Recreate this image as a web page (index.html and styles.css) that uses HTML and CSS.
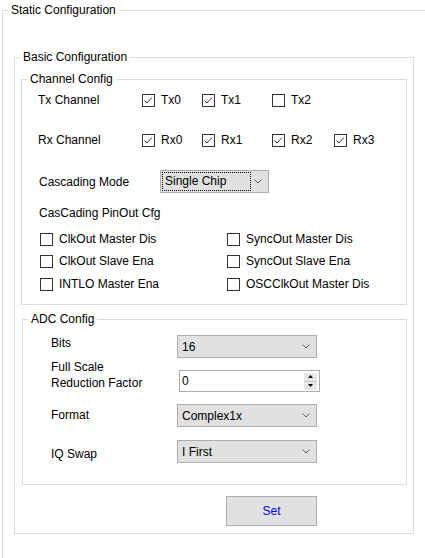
FILE: index.html
```html
<!DOCTYPE html>
<html>
<head>
<meta charset="utf-8">
<title>Static Configuration</title>
<link rel="stylesheet" href="styles.css">
</head>
<body>
<fieldset class="grp outer">
  <legend>Static Configuration</legend>
  <fieldset class="grp basic">
    <legend>Basic Configuration</legend>
    <fieldset class="grp channel">
      <legend>Channel Config</legend>
      <div class="chrow tx">
        <span class="lbl">Tx Channel</span>
        <label class="cb"><span class="box"><svg viewBox="0 0 13 13" width="13" height="13"><polyline points="2.5,6.5 5,9 10,3.5" /></svg></span>Tx0</label>
        <label class="cb"><span class="box"><svg viewBox="0 0 13 13" width="13" height="13"><polyline points="2.5,6.5 5,9 10,3.5" /></svg></span>Tx1</label>
        <label class="cb"><span class="box"></span>Tx2</label>
      </div>
      <div class="chrow rx">
        <span class="lbl">Rx Channel</span>
        <label class="cb"><span class="box"><svg viewBox="0 0 13 13" width="13" height="13"><polyline points="2.5,6.5 5,9 10,3.5" /></svg></span>Rx0</label>
        <label class="cb"><span class="box"><svg viewBox="0 0 13 13" width="13" height="13"><polyline points="2.5,6.5 5,9 10,3.5" /></svg></span>Rx1</label>
        <label class="cb"><span class="box"><svg viewBox="0 0 13 13" width="13" height="13"><polyline points="2.5,6.5 5,9 10,3.5" /></svg></span>Rx2</label>
        <label class="cb"><span class="box"><svg viewBox="0 0 13 13" width="13" height="13"><polyline points="2.5,6.5 5,9 10,3.5" /></svg></span>Rx3</label>
      </div>
      <div class="casrow">
        <span class="lbl">Cascading Mode</span>
        <div class="combo cascombo">
          <span class="focus">Single Chip</span>
          <svg class="arrow" viewBox="0 0 8 5" width="8" height="5"><polyline points="0.5,0.5 4,4 7.5,0.5" /></svg>
        </div>
      </div>
      <div class="pinlbl">CasCading PinOut Cfg</div>
      <div class="pingrid">
        <label class="cb"><span class="box"></span>ClkOut Master Dis</label>
        <label class="cb"><span class="box"></span>SyncOut Master Dis</label>
        <label class="cb"><span class="box"></span>ClkOut Slave Ena</label>
        <label class="cb"><span class="box"></span>SyncOut Slave Ena</label>
        <label class="cb"><span class="box"></span>INTLO Master Ena</label>
        <label class="cb"><span class="box"></span>OSCClkOut Master Dis</label>
      </div>
    </fieldset>
    <fieldset class="grp adc">
      <legend>ADC Config</legend>
      <div class="adcrow r-bits">
        <span class="lbl">Bits</span>
        <div class="combo adccombo"><span class="val">16</span><svg class="arrow" viewBox="0 0 8 5" width="8" height="5"><polyline points="0.5,0.5 4,4 7.5,0.5" /></svg></div>
      </div>
      <div class="adcrow r-fs">
        <span class="lbl">Full Scale<br>Reduction Factor</span>
        <div class="spin">
          <span class="val">0</span>
          <div class="spinbtns">
            <span class="sb"><svg viewBox="0 0 5 3" width="5" height="3"><polygon points="0,3 2.5,0 5,3" /></svg></span>
            <span class="sb"><svg viewBox="0 0 5 3" width="5" height="3"><polygon points="0,0 2.5,3 5,0" /></svg></span>
          </div>
        </div>
      </div>
      <div class="adcrow r-fmt">
        <span class="lbl">Format</span>
        <div class="combo adccombo"><span class="val">Complex1x</span><svg class="arrow" viewBox="0 0 8 5" width="8" height="5"><polyline points="0.5,0.5 4,4 7.5,0.5" /></svg></div>
      </div>
      <div class="adcrow r-iq">
        <span class="lbl">IQ Swap</span>
        <div class="combo adccombo"><span class="val">I First</span><svg class="arrow" viewBox="0 0 8 5" width="8" height="5"><polyline points="0.5,0.5 4,4 7.5,0.5" /></svg></div>
      </div>
    </fieldset>
    <button class="setbtn" type="button">Set</button>
  </fieldset>
</fieldset>
</body>
</html>
```
FILE: styles.css
```css
html, body {
  margin: 0;
  padding: 0;
  width: 425px;
  height: 558px;
  overflow: hidden;
  background: #ffffff;
}
body {
  font-family: "Liberation Sans", Arial, sans-serif;
  font-size: 12px;
  line-height: 14px;
  color: #000000;
}
.grp {
  margin: 0;
  padding: 0;
  min-width: 0;
  border: 1px solid #dcdcdc;
  box-sizing: border-box;
}
.grp > legend {
  margin-left: 5px;
  padding: 0 3px;
  line-height: 14px;
}
.outer {
  margin: 3px 0 0 2px;
  width: 423px;
  height: 555px;
  border-right-width: 0;
  border-bottom-width: 0;
}
.basic {
  margin: 33px 0 0 11px;
  width: 400px;
  padding-bottom: 7px;
}
.channel {
  margin: 8px 0 0 6px;
  width: 386px;
  padding-bottom: 12px;
}
.adc {
  margin: 7px 0 0 7px;
  width: 385px;
  padding-bottom: 21px;
}
.chrow {
  display: grid;
  grid-template-columns: 104px 60px 70px 62px 1fr;
  align-items: center;
  height: 24px;
  padding-left: 16px;
}
.chrow.tx { margin-top: 2px; }
.chrow.rx { margin-top: 16px; }
.cb {
  display: flex;
  align-items: center;
  gap: 6px;
  white-space: nowrap;
}
.box {
  display: block;
  width: 13px;
  height: 13px;
  box-sizing: border-box;
  border: 1px solid #333333;
  background: #ffffff;
}
.box svg {
  display: block;
  margin: -1px 0 0 -1px;
  fill: none;
  stroke: #333333;
  stroke-width: 1;
}
.casrow {
  display: grid;
  grid-template-columns: 121px 109px;
  align-items: center;
  height: 23px;
  margin-top: 18px;
  padding-left: 17px;
}
.combo {
  display: flex;
  align-items: center;
  justify-content: space-between;
  box-sizing: border-box;
  height: 23px;
  background: #e1e1e1;
  border: 1px solid #adadad;
}
.combo .arrow {
  display: block;
  fill: none;
  stroke: #606060;
  stroke-width: 1;
  margin-right: 6px;
}
.focus {
  display: block;
  box-sizing: border-box;
  width: 89px;
  height: 19px;
  margin-left: 1px;
  padding-left: 2px;
  line-height: 17px;
  border: 1px dotted #000000;
}
.pinlbl {
  margin-top: 13px;
  padding-left: 17px;
  height: 14px;
}
.pingrid {
  display: grid;
  grid-template-columns: 187px 1fr;
  grid-template-rows: 22px 23px 16px;
  align-items: start;
  margin-top: 11px;
  padding-left: 18px;
}
.pingrid .cb { height: 16px; }
.adcrow {
  display: grid;
  grid-template-columns: 126px 140px;
  align-items: start;
  padding-left: 28px;
}
.r-bits { margin-top: 9px; }
.r-bits .lbl { padding-top: 1px; }
.r-fs { margin-top: 1px; }
.r-fs .lbl { line-height: 16px; }
.r-fmt { margin-top: 12px; }
.r-fmt .lbl { padding-top: 4px; }
.r-iq { margin-top: 13px; }
.r-iq .lbl { padding-top: 7px; }
.adccombo .val { padding-left: 4px; }
.spin {
  display: flex;
  align-items: center;
  justify-content: space-between;
  box-sizing: border-box;
  width: 141px;
  height: 22px;
  margin: 11px 0 0 2px;
  background: #ffffff;
  border: 1px solid #adadad;
}
.spin .val { padding-left: 2px; }
.spinbtns {
  display: flex;
  flex-direction: column;
  margin-right: 2px;
  background: #c8c8c8;
  gap: 1px;
}
.sb {
  display: flex;
  align-items: center;
  justify-content: center;
  width: 13px;
  height: 8px;
  background: #e8e8e8;
}
.sb svg { display: block; fill: #000000; }
.setbtn {
  display: block;
  margin: 11px 0 0 211px;
  width: 91px;
  height: 30px;
  padding: 0;
  box-sizing: border-box;
  background: #e1e1e1;
  border: 1px solid #adadad;
  border-radius: 0;
  font-family: "Liberation Sans", Arial, sans-serif;
  font-size: 12px;
  color: #0000ff;
}
```
